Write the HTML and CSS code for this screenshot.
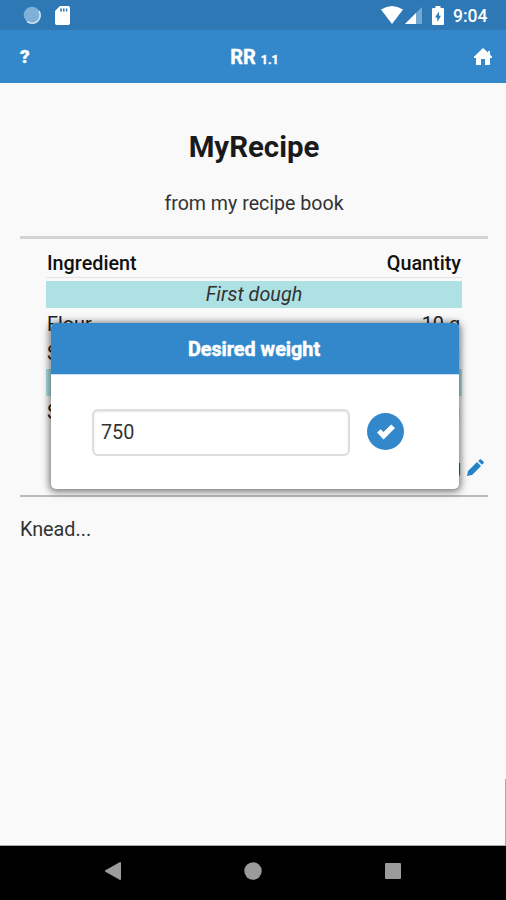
FILE: index.html
```html
<!DOCTYPE html>
<html lang="en">
<head>
<meta charset="utf-8">
<title>RR</title>
<link rel="stylesheet" href="styles.css">
</head>
<body>
<div class="phone">
  <div class="status">
    <div class="status-left">
      <svg width="20" height="20" viewBox="0 0 20 20"><circle cx="10" cy="10" r="8.300" fill="#7fb0d8"/><path d="M17 6A8 8 0 0 1 5 16.300" fill="none" stroke="#d3e5f3" stroke-width="1.600"/></svg>
      <svg width="15" height="19" viewBox="0 0 15 19"><path fill="#fff" fill-rule="evenodd" d="M5 0h8.200Q15 0 15 1.800V17.200Q15 19 13.200 19H1.800Q0 19 0 17.200V5zM5.200 2.500v3h1.700V2.500zM8 2.500v3h1.500V2.500zM10.800 2.500v3h1.500V2.500z"/></svg>
    </div>
    <div class="status-right">
      <svg class="wifi" width="22" height="18" viewBox="0 0 22 18"><path fill="#fff" d="M0 3.500Q11-3.500 22 3.500L11 18z"/></svg>
      <svg class="signal" width="17" height="17" viewBox="0 0 17 17"><path fill="#75a9d3" d="M17 0v17H0z"/><path fill="#fff" d="M11 6v11H0z"/></svg>
      <svg class="battery" width="12" height="19" viewBox="0 0 12 19"><path fill="#fff" d="M3.500 0h5v2H11q1 0 1 1v15q0 1-1 1H1q-1 0-1-1V3q0-1 1-1h2.500z"/><path fill="#2e79b5" d="M7 5.500 3 11.500h2.300V16L9 9.800H7z"/></svg>
      <span class="clock">9:04</span>
    </div>
  </div>
  <header class="bar">
    <span class="help">?</span>
    <h1>RR <small>1.1</small></h1>
    <svg class="home" width="18" height="17" viewBox="0 0 18 17"><path fill="#fff" d="M9 0l5 4.500V3h2v3.500l2 2.200V10h-2v7h-5v-6H7v6H2v-7H0V8.700z"/></svg>
  </header>
  <main>
    <h2>MyRecipe</h2>
    <p class="source">from my recipe book</p>
    <hr>
    <div class="table">
      <div class="row head"><span>Ingredient</span><span>Quantity</span></div>
      <div class="band">First dough</div>
      <div class="row"><span>Flour</span><span>10 g</span></div>
      <div class="row"><span>Salt</span><span>5 g</span></div>
      <div class="band">Second dough</div>
      <div class="row"><span>Sugar</span><span>5 g</span></div>
    </div>
    <div class="total">
      <span>20 g</span>
      <svg width="17" height="17" viewBox="0 0 17 17"><path fill="#2582c9" d="M0 17l1-5L10 3l4 4-9 9zM11.200 2l1.300-1.300q1-1 2 0l1.800 1.800q1 1 0 2L15 5.800z"/></svg>
    </div>
    <hr>
    <p class="steps">Knead...</p>
    <div class="scroll"></div>
    <div class="dialog">
      <div class="dialog-title">Desired weight</div>
      <div class="dialog-body">
        <input type="text" value="750">
        <button type="button"><svg width="18" height="16" viewBox="0 0 18 16"><path fill="#fff" d="M0 8.500 3.500 5.200 6.500 8 14.200.5 18 4 6.500 15.500z"/></svg></button>
      </div>
    </div>
  </main>
  <nav>
    <svg width="16" height="18" viewBox="0 0 16 18"><path fill="#9b9b9b" d="M15 0q1 0 1 1v16q0 1-1 1L0 9.500v-1z"/></svg>
    <svg width="18" height="18" viewBox="0 0 18 18"><circle cx="9" cy="9" r="8.700" fill="#9b9b9b"/></svg>
    <svg width="16" height="16" viewBox="0 0 16 16"><rect width="16" height="16" rx="1" fill="#9b9b9b"/></svg>
  </nav>
</div>
</body>
</html>
```
FILE: styles.css
```css
* { box-sizing: border-box; }
body { margin: 0; font-family: Roboto, "Liberation Sans", sans-serif; font-size: 19.8px; color: #333; }
svg { display: block; flex: none; }
.phone { width: 506px; height: 900px; display: flex; flex-direction: column; overflow: hidden; background: #f9f9f9; }
.status { height: 30px; flex: none; background: #2e79b5; display: flex; justify-content: space-between; padding: 0 18px 0 22px; }
.status-left, .status-right { display: flex; align-items: center; }
.status-left { gap: 13px; }
.signal { margin: 1px 0 0 2px; }
.battery { margin-left: 10px; }
.clock { margin: 2px 0 0 9px; font-size: 17.500px; font-weight: 500; color: #fff; width: 35px; line-height: 20px; }
.bar { height: 53px; flex: none; background: #3388cc; color: #fff; display: grid; grid-template-columns: 60px 1fr 60px; align-items: center; padding: 0 14px 0 20px; }
.help { font-size: 19px; font-weight: 900; -webkit-text-stroke: .3px #fff; }
.bar h1 { margin: 0 3px 0 0; font-size: 20px; font-weight: 700; text-align: center; -webkit-text-stroke: .4px #fff; }
.bar small { font-size: 12.500px; }
.home { justify-self: end; }
main { position: relative; flex: 1; padding: 45px 18px 0 20px; border-bottom: 1px solid #aaa; }
h2 { margin: 0; text-align: center; font-size: 29.4px; line-height: 38px; font-weight: 700; color: #1a1a1a; }
.source { margin: 24px 0 18px; text-align: center; font-size: 19.6px; line-height: 28px; }
hr { margin: 0; border: 0; height: 3px; background: #d3d3d3; }
.table { margin: 11px 26px 0 26px; display: flex; flex-direction: column; gap: 3px; }
.row { display: flex; justify-content: space-between; height: 26px; padding: 0 1px; line-height: 28px; color: #222; }
.row span:last-child { text-align: right; }
.row:not(.head) span:last-child { padding-right: 1px; }
.head { height: 28px; font-weight: 500; border-bottom: 1px solid #e4e4e4; color: #111; }
.band { height: 27px; line-height: 27px; text-align: center; font-style: italic; background: #aee1e4; }
.total { display: flex; justify-content: flex-end; align-items: center; gap: 6px; margin-top: 29px; height: 26px; padding-right: 4px; }
.total + hr { margin-top: 15px; height: 2px; background: #bbb; }
.steps { margin: 19px 0 0; line-height: 28px; }
.scroll { position: absolute; right: 0; bottom: 0; width: 1px; height: 66px; background: #aaa; }
.dialog { position: absolute; left: 51px; top: 240px; width: 408px; height: 166px; border-radius: 5px; background: #fff; box-shadow: 0 1px 7px 2px rgba(0,0,0,.5); overflow: hidden; }
.dialog-title { height: 52px; line-height: 54px; background: #3388cc; color: #fff; font-weight: 700; text-align: center; padding-right: 2px; border-bottom: 1px solid #c9dff0; -webkit-text-stroke: .5px #fff; }
.dialog-body { display: flex; align-items: center; gap: 17px; padding: 34px 0 0 41px; }
input { width: 258px; height: 47px; border: 2px solid #ddd; border-radius: 6px; padding: 0 7px; font: inherit; color: #333; background: #fff; box-shadow: inset 0 1px 2px rgba(0,0,0,.1); }
button { width: 37px; height: 37px; margin-top: -2px; padding: 0; border: 0; border-radius: 50%; background: #3388cc; display: flex; align-items: center; justify-content: center; }
nav { height: 54px; flex: none; background: #000; display: flex; align-items: center; justify-content: space-between; padding: 0 105px 4px 105px; }
```
